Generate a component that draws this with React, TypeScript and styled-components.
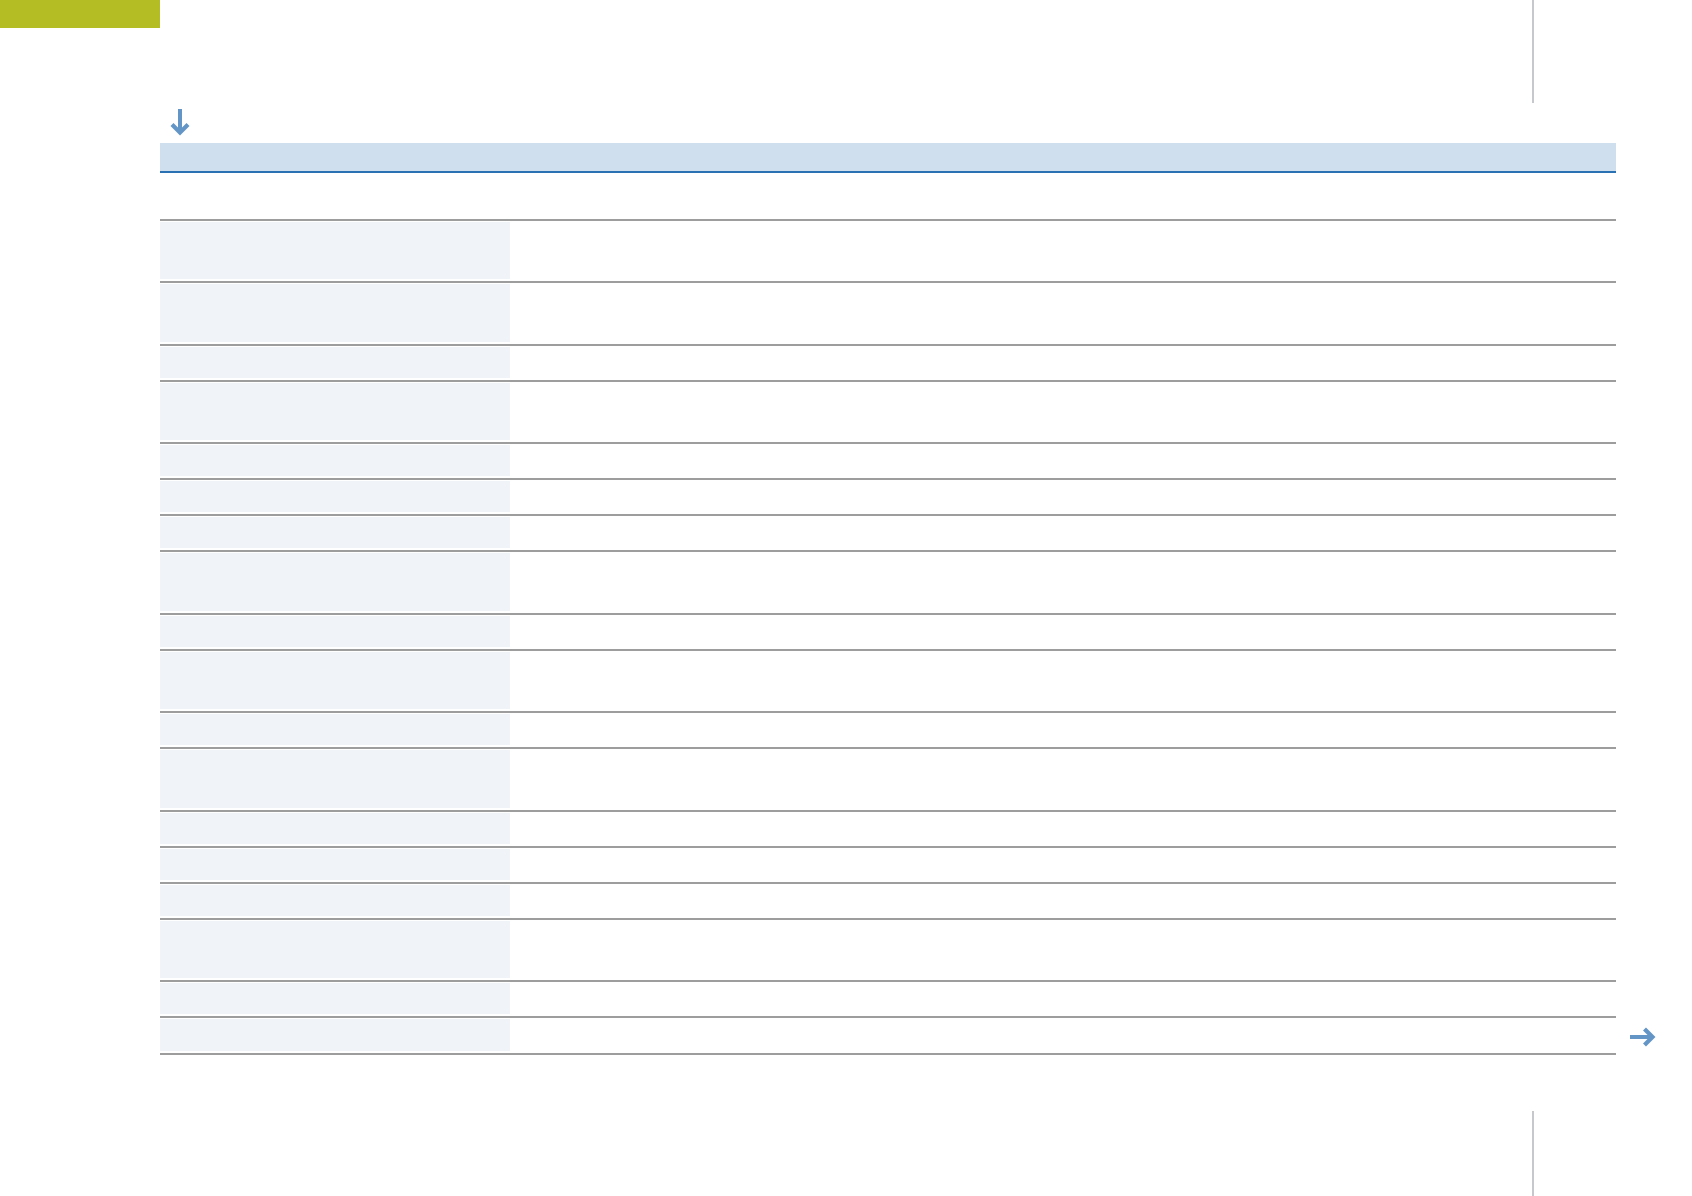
import styled, { createGlobalStyle } from "styled-components"

const GlobalStyle = createGlobalStyle`
    html, body {
        margin: 0;
        padding: 0;
        background: #ffffff;
        font-family: "Liberation Sans", Arial, sans-serif;
        overflow: hidden;
    }
`

const rows: ("tall" | "short")[] = [
    "tall", "tall", "short", "tall", "short", "short", "short", "tall", "short",
    "tall", "short", "tall", "short", "short", "short", "tall", "short", "short",
]

function DownArrow() {
    return (
        <svg width="20" height="28" viewBox="0 0 20 28">
            <rect x="8" y="0" width="4" height="24" fill="#6396c6" />
            <path d="M2 15.5 L10 23.5 L18 15.5" stroke="#6396c6" strokeWidth="4.2" fill="none" />
        </svg>
    )
}

function RightArrow() {
    return (
        <svg width="26" height="20" viewBox="0 0 26 20">
            <rect x="0" y="8" width="21" height="4" fill="#6396c6" />
            <path d="M14.5 2 L22.5 10 L14.5 18" stroke="#6396c6" strokeWidth="4.2" fill="none" />
        </svg>
    )
}

export default function App() {
    return (
        <>
            <GlobalStyle />
            <Page>
                <TopBar>
                    <SectionTab />
                    <span />
                    <Rule />
                    <span />
                </TopBar>
                <ArrowRow>
                    <DownArrow />
                </ArrowRow>
                <Main>
                    <Table>
                        <HeadBand />
                        <SubHead />
                        {rows.map((size, i) => (
                            <Row key={i} $size={size}>
                                <LabelCell />
                                <ValueCell />
                            </Row>
                        ))}
                        <TableEnd />
                    </Table>
                    <NextLink>
                        <RightArrow />
                    </NextLink>
                </Main>
                <Footer>
                    <span />
                    <span />
                    <Rule />
                    <span />
                </Footer>
            </Page>
        </>
    )
}

const Page = styled.div`
    width: 1692px;
    height: 1196px;
    display: flex;
    flex-direction: column;
`

const TopBar = styled.div`
    height: 103px;
    display: grid;
    grid-template-columns: 160px 1fr 2px 158px;
    align-items: start;
`

const SectionTab = styled.div`
    height: 28px;
    background-color: #b4bd24;
`

const Rule = styled.div`
    height: 100%;
    background-color: #c6c8cb;
`

const ArrowRow = styled.div`
    margin-top: 6px;
    padding-left: 170px;
    height: 28px;
    display: flex;

    & > svg {
        display: block;
    }
`

const Main = styled.div`
    margin-top: 6.3px;
    padding-left: 160px;
    display: flex;
    align-items: flex-end;
`

const Table = styled.div`
    width: 1456px;
    display: flex;
    flex-direction: column;
`

const HeadBand = styled.div`
    height: 28px;
    background-color: #cfdfee;
    border-bottom: 2px solid #2a71b4;
`

const SubHead = styled.div`
    height: 45.7px;
`

const Row = styled.div<{ $size: "tall" | "short" }>`
    height: ${(p) => (p.$size === "tall" ? "62.3px" : "36.15px")};
    box-sizing: border-box;
    border-top: 2px solid #9d9d9d;
    display: grid;
    grid-template-columns: 351px 1fr;
    padding: 1px 0 2px;
`

const LabelCell = styled.div`
    background-color: #f0f3f8;
    margin-right: 1px;
`

const ValueCell = styled.div`
    background-color: #ffffff;
`

const TableEnd = styled.div`
    border-top: 2px solid #9d9d9d;
`

const NextLink = styled.div`
    margin-left: 14px;
    margin-bottom: 8px;

    & > svg {
        display: block;
    }
`

const Footer = styled.div`
    margin-top: 56.3px;
    flex: 1;
    display: grid;
    grid-template-columns: 160px 1fr 2px 158px;
`
